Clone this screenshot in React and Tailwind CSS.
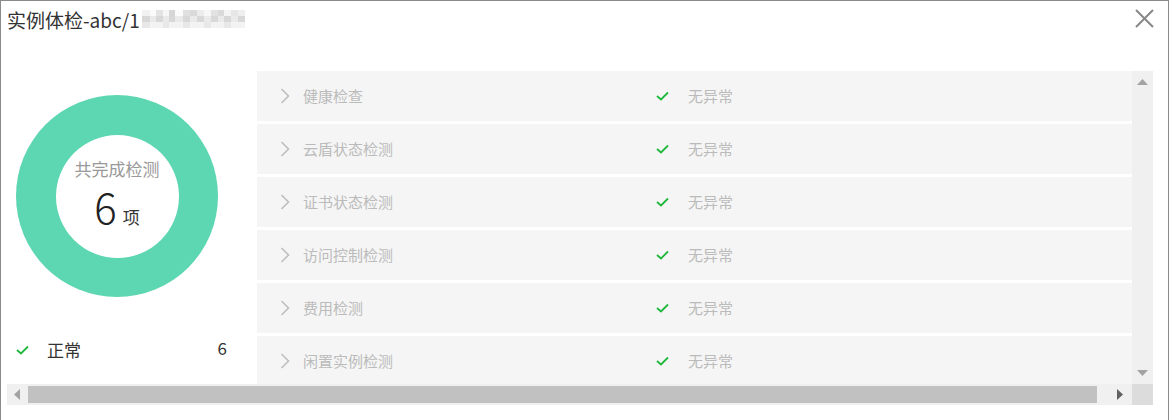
import React from 'react'

const items = ["健康检查", "云盾状态检测", "证书状态检测", "访问控制检测", "费用检测", "闲置实例检测"]

const cjk = { fontFamily: '"Noto Sans CJK SC", "Noto Sans", sans-serif' }

function Check({ className }) {
    return (
        <svg width="13" height="10" viewBox="0 0 13 10" className={className}>
            <polyline points="1,5 5,8.5 12,1.5" fill="none" stroke="#1fb83c" strokeWidth="1.8" />
        </svg>
    )
}

function Chevron() {
    return (
        <svg width="10" height="16" viewBox="0 0 10 16">
            <polyline points="1.5,1 8.5,8 1.5,15" fill="none" stroke="#bdbdbd" strokeWidth="1.6" />
        </svg>
    )
}

// blurred (pixelated) part of the title
const mosaic = [
    ["#f2f2f2", 8], ["#fafafa", 6], ["#e3e3e3", 7], ["#f6f6f6", 6], ["#d6d6d6", 6], ["#fbfbfb", 8],
    ["#e0e0e0", 7], ["#dadada", 7], ["#ececec", 7], ["#f7f7f7", 7], ["#e2e2e2", 7], ["#d9d9d9", 6],
    ["#f4f4f4", 7], ["#e6e6e6", 7], ["#efefef", 7],
]

export default function App() {
    return (
        <div className="w-[1170px] h-[420px] bg-white overflow-hidden" style={cjk}>
            <div className="w-[1169px] h-[421px] border border-[#8a8a8a] flex flex-col">
                <div className="h-[36px] flex items-center justify-between pl-[6px] pr-[14px]">
                    <div className="flex items-center">
                        <span className="text-[19px] text-[#333] leading-none">实例体检-abc/1</span>
                        <div className="flex ml-[2px] h-[18px]">
                            {mosaic.map(([c, w], i) => (
                                <div key={i} className="flex flex-col">
                                    <div className="h-[6px]" style={{ width: w, background: c }} />
                                    <div className="h-[6px]" style={{ width: w, background: i % 2 ? "#eaeaea" : "#d8d8d8" }} />
                                    <div className="h-[6px]" style={{ width: w, background: i % 3 ? "#f3f3f3" : "#e8e8e8" }} />
                                </div>
                            ))}
                        </div>
                    </div>
                    <svg width="19" height="19" viewBox="0 0 19 19" className="mt-[-1px]">
                        <path d="M1 1L18 18M18 1L1 18" stroke="#888" strokeWidth="2" />
                    </svg>
                </div>

                <div className="ml-[6px] mt-[34px] w-[1146px] flex flex-col">
                    <div className="flex h-[313px]">
                        <div className="w-[250px] flex flex-col">
                            <div className="ml-[9px] mt-[24px] w-[202px] h-[202px] rounded-full bg-[#5dd6b2] flex items-center justify-center">
                                <div className="w-[123px] h-[123px] rounded-full bg-white flex flex-col items-center pt-[25px]">
                                    <span className="text-[17px] text-[#999] leading-none">共完成检测</span>
                                    <div className="flex items-baseline mt-[8px]">
                                        <span className="text-[42px] leading-none text-[#222] font-light">6</span>
                                        <span className="text-[17px] text-[#333] ml-[6px]">项</span>
                                    </div>
                                </div>
                            </div>
                            <div className="flex items-center mt-[44px] pl-[9px] pr-[30px]">
                                <Check />
                                <span className="ml-[18px] text-[17px] text-[#333] leading-none">正常</span>
                                <span className="ml-auto text-[17px] text-[#333] leading-none mt-[-5px]">6</span>
                            </div>
                        </div>
                        <div className="flex-1 overflow-hidden flex flex-col gap-[3px]">
                            {items.map((t) => (
                                <div key={t} className="shrink-0 h-[50px] bg-[#f5f5f5] flex items-center">
                                    <div className="ml-[23px] w-[23px] flex">
                                        <Chevron />
                                    </div>
                                    <span className="w-[353px] text-[15px] text-[#bbb]">{t}</span>
                                    <Check />
                                    <span className="ml-[19px] text-[15px] text-[#bbb]">无异常</span>
                                </div>
                            ))}
                        </div>
                        <div className="w-[21px] bg-[#f0f0f0] flex flex-col items-center justify-between py-[8px]">
                            <svg width="11" height="6" viewBox="0 0 11 6"><polygon points="5.5,0 11,6 0,6" fill="#a3a3a3" /></svg>
                            <svg width="11" height="6" viewBox="0 0 11 6"><polygon points="0,0 11,0 5.5,6" fill="#a3a3a3" /></svg>
                        </div>
                    </div>
                    <div className="h-[21px] flex">
                        <div className="flex-1 bg-[#f0f0f0] flex items-center">
                            <svg width="6" height="11" viewBox="0 0 6 11" className="ml-[7px]"><polygon points="6,0 6,11 0,5.5" fill="#a3a3a3" /></svg>
                            <div className="ml-[8px] w-[1069px] h-[17px] bg-[#c1c1c1]" />
                            <svg width="6" height="11" viewBox="0 0 6 11" className="ml-[20px]"><polygon points="0,0 6,5.5 0,11" fill="#606060" /></svg>
                        </div>
                        <div className="w-[21px] bg-[#dcdcdc]" />
                    </div>
                </div>
            </div>
        </div>
    )
}
